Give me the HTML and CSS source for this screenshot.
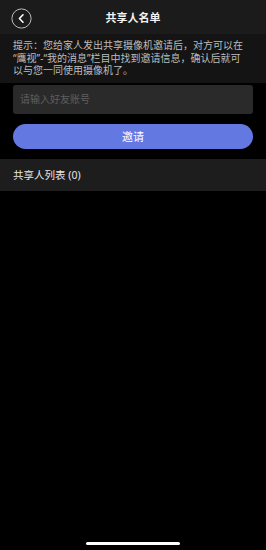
FILE: index.html
```html
<!DOCTYPE html>
<html lang="zh-CN">
<head>
    <meta charset="UTF-8">
    <meta name="viewport" content="width=device-width, initial-scale=1.0">
    <title>共享人名单</title>
    <link rel="stylesheet" href="styles.css">
</head>
<body>
    <div class="page">
        <header class="nav">
            <button class="back" type="button">
                <svg width="21" height="21" viewBox="0 0 21 21">
                    <circle cx="10.5" cy="10.5" r="9.6" fill="none" stroke="#bbb" stroke-width="1"/>
                    <path d="M12 6.8 L8.4 10.5 L12 14.2" fill="none" stroke="#fff" stroke-width="1.6" stroke-linecap="round" stroke-linejoin="round"/>
                </svg>
            </button>
            <h1 class="title">共享人名单</h1>
        </header>

        <p class="tip">提示：您给家人发出共享摄像机邀请后，对方可以在“鹰视”-“我的消息”栏目中找到邀请信息，确认后就可以与您一同使用摄像机了。</p>

        <form class="invite">
            <input class="account" type="text" placeholder="请输入好友账号">
            <button class="submit" type="button">邀请</button>
        </form>

        <div class="list-head">共享人列表 (0)</div>

        <div class="home-bar"></div>
    </div>
</body>
</html>
```

FILE: styles.css
```css
body {
    margin: 0;
    background-color: #000;
    font-family: "Noto Sans", "Noto Sans CJK SC", sans-serif;
    color: #fff;
}
.page {
    position: relative;
    width: 266px;
    height: 550px;
    overflow: hidden;
    background-color: #000;
}
.nav {
    position: relative;
    height: 34px;
    background-color: #1b1b1b;
    display: flex;
    align-items: center;
    justify-content: center;
}
.back {
    position: absolute;
    left: 11px;
    top: 8px;
    width: 22px;
    height: 22px;
    padding: 0;
    border: none;
    background: none;
    display: flex;
}
.title {
    margin: 0;
    font-size: 11px;
    font-weight: bold;
    color: #f2f2f2;
}
.tip {
    margin: 0;
    padding: 5px 21px 6px 13px;
    background-color: #141414;
    font-size: 10px;
    line-height: 12.5px;
    color: #bdbdbd;
}
.invite {
    padding: 2px 13px 10px 13px;
    display: flex;
    flex-direction: column;
    gap: 10px;
}
.account {
    height: 29px;
    padding: 0 7px;
    border: none;
    border-radius: 3px;
    background-color: #2a2a2a;
    font-family: inherit;
    font-size: 10px;
    color: #ddd;
    outline: none;
}
.account::placeholder {
    color: #5f5f5f;
}
.submit {
    height: 25px;
    border: none;
    border-radius: 13px;
    background-color: #6478e2;
    font-family: inherit;
    font-size: 11px;
    color: #fff;
}
.list-head {
    height: 32px;
    padding: 0 13px;
    background-color: #1d1d1d;
    display: flex;
    align-items: center;
    font-size: 10.5px;
    color: #e6e6e6;
}
.home-bar {
    position: absolute;
    left: 86px;
    bottom: 5px;
    width: 94px;
    height: 3px;
    border-radius: 2px;
    background-color: #fff;
}
```
